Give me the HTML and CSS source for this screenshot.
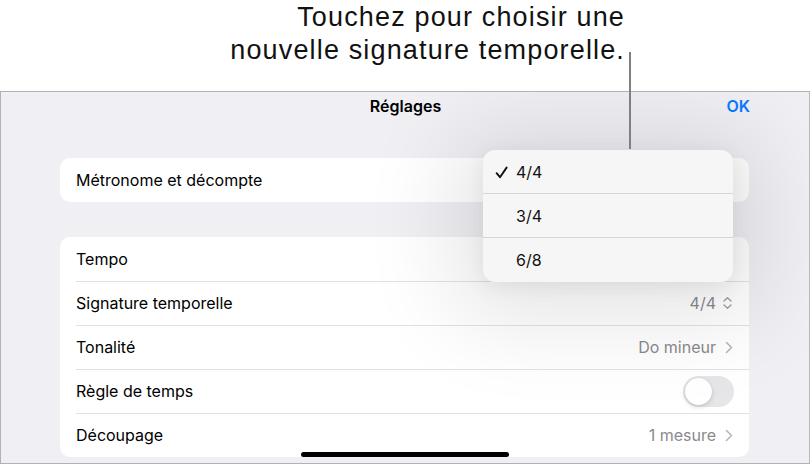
FILE: index.html
```html
<!DOCTYPE html>
<html lang="fr">
<head>
<meta charset="utf-8">
<link rel="stylesheet" href="styles.css">
</head>
<body>
<div class="page">
  <div class="callout">
    <p class="callout-text">Touchez pour choisir une<br>nouvelle signature temporelle.</p>
    <div class="callout-line"></div>
  </div>
  <div class="screen">
    <div class="navbar">
      <span class="nav-title">Réglages</span>
      <span class="nav-ok">OK</span>
    </div>
    <div class="card card-single">
      <div class="row">
        <span class="label">Métronome et décompte</span>
        <svg class="chev" width="8" height="13" viewBox="0 0 8 13"><path d="M1.5 1.5 L6.5 6.5 L1.5 11.5" fill="none" stroke="currentColor" stroke-width="1.6" stroke-linecap="round" stroke-linejoin="round"/></svg>
      </div>
    </div>
    <div class="card card-list">
      <div class="row">
        <span class="label">Tempo</span>
        <svg class="chev" width="8" height="13" viewBox="0 0 8 13"><path d="M1.5 1.5 L6.5 6.5 L1.5 11.5" fill="none" stroke="currentColor" stroke-width="1.6" stroke-linecap="round" stroke-linejoin="round"/></svg>
      </div>
      <div class="row">
        <span class="label">Signature temporelle</span>
        <span class="value value-tight">4/4</span>
        <svg class="updown" width="11" height="14" viewBox="0 0 11 14"><path d="M2 5 L5.5 1.8 L9 5 M2 9 L5.5 12.2 L9 9" fill="none" stroke="currentColor" stroke-width="1.4" stroke-linecap="round" stroke-linejoin="round"/></svg>
      </div>
      <div class="row">
        <span class="label">Tonalité</span>
        <span class="value">Do mineur</span>
        <svg class="chev" width="8" height="13" viewBox="0 0 8 13"><path d="M1.5 1.5 L6.5 6.5 L1.5 11.5" fill="none" stroke="currentColor" stroke-width="1.6" stroke-linecap="round" stroke-linejoin="round"/></svg>
      </div>
      <div class="row">
        <span class="label">Règle de temps</span>
        <span class="toggle"><span class="knob"></span></span>
      </div>
      <div class="row">
        <span class="label">Découpage</span>
        <span class="value">1 mesure</span>
        <svg class="chev" width="8" height="13" viewBox="0 0 8 13"><path d="M1.5 1.5 L6.5 6.5 L1.5 11.5" fill="none" stroke="currentColor" stroke-width="1.6" stroke-linecap="round" stroke-linejoin="round"/></svg>
      </div>
    </div>
    <div class="popup">
      <div class="popup-item"><span class="check"><svg width="13" height="13" viewBox="0 0 13 13"><path d="M1.6 7.2 L5 11.2 L11.6 1.6" fill="none" stroke="currentColor" stroke-width="1.9" stroke-linecap="round" stroke-linejoin="round"/></svg></span><span>4/4</span></div>
      <div class="popup-item"><span class="check"></span><span>3/4</span></div>
      <div class="popup-item"><span class="check"></span><span>6/8</span></div>
    </div>
    <div class="home-bar"></div>
  </div>
</div>
</body>
</html>
```
FILE: styles.css
```css
* { box-sizing: border-box; }
html, body {
  margin: 0;
  padding: 0;
  background: #ffffff;
}
body {
  font-family: "Inter", "Liberation Sans", sans-serif;
  color: #000;
  width: 811px;
  height: 466px;
  overflow: hidden;
}
.page {
  width: 811px;
  height: 466px;
  position: relative;
}
.callout {
  height: 91px;
  position: relative;
}
.callout-text {
  margin: 0;
  position: absolute;
  right: 187px;
  top: 0;
  text-align: right;
  font-family: "Liberation Sans", sans-serif;
  font-size: 27px;
  letter-spacing: 1.15px;
  line-height: 33px;
  padding-top: 1px;
  color: #111;
  margin-right: -1px;
}
.callout-line {
  position: absolute;
  left: 629px;
  top: 52px;
  width: 2px;
  height: 97px;
  background: #808080;
  z-index: 5;
}
.screen {
  width: 810px;
  height: 373px;
  border: 1px solid #b2b2b2;
  border-right-color: #b8b8b8;
  background: #efeff4;
  position: relative;
  overflow: hidden;
}
.navbar {
  height: 25px;
  display: flex;
  align-items: flex-end;
  justify-content: center;
  position: relative;
}
.nav-title {
  font-weight: 600;
  font-size: 16px;
  line-height: 22px;
  margin-left: 1px;
}
.nav-ok {
  position: absolute;
  right: 59px;
  bottom: 0;
  color: #0a7aff;
  font-weight: 600;
  font-size: 16px;
  line-height: 22px;
}
.card {
  margin: 0 60px 0 59px;
  background: #fff;
  border-radius: 10px;
  overflow: hidden;
}
.card-single { margin-top: 41px; }
.card-list { margin-top: 35px; }
.row {
  height: 44px;
  display: flex;
  align-items: center;
  padding: 0 16px;
  position: relative;
  font-size: 16px;
}
.card-list .row + .row::before {
  content: "";
  position: absolute;
  left: 16px;
  right: 0;
  top: 0;
  height: 1px;
  background: #e2e2e6;
}
.label { flex: 1; }
.value {
  color: #8a8a8e;
  margin-right: 9px;
}
.value-tight { margin-right: 6px; }
.chev { color: #b8b8bc; }
.updown { color: #a0a0a4; }
.toggle {
  width: 51px;
  height: 31px;
  border-radius: 16px;
  background: #e6e6e9;
  position: relative;
  margin-right: -1px;
}
.knob {
  position: absolute;
  left: 2px;
  top: 2px;
  width: 27px;
  height: 27px;
  border-radius: 50%;
  background: #fff;
  box-shadow: 0 2px 5px rgba(0,0,0,0.15), 0 0 1px rgba(0,0,0,0.12);
}
.popup {
  position: absolute;
  left: 482px;
  top: 58px;
  width: 250px;
  background: #f6f6f6;
  border-radius: 12px;
  box-shadow: 0 10px 90px 30px rgba(0,0,0,0.1), 0 4px 20px rgba(0,0,0,0.07);
  overflow: hidden;
  z-index: 3;
}
.popup-item {
  height: 44px;
  display: flex;
  align-items: center;
  padding-left: 12px;
  font-size: 16px;
  color: #111;
  position: relative;
}
.popup-item + .popup-item::before {
  content: "";
  position: absolute;
  left: 0;
  right: 0;
  top: -1px;
  height: 1px;
  background: #d6d6d6;
}
.check {
  width: 21px;
  height: 13px;
  display: flex;
  align-items: center;
  color: #111;
}
.home-bar {
  position: absolute;
  left: 300px;
  top: 360px;
  width: 208px;
  height: 5px;
  border-radius: 3px;
  background: #000;
  z-index: 4;
}
```
